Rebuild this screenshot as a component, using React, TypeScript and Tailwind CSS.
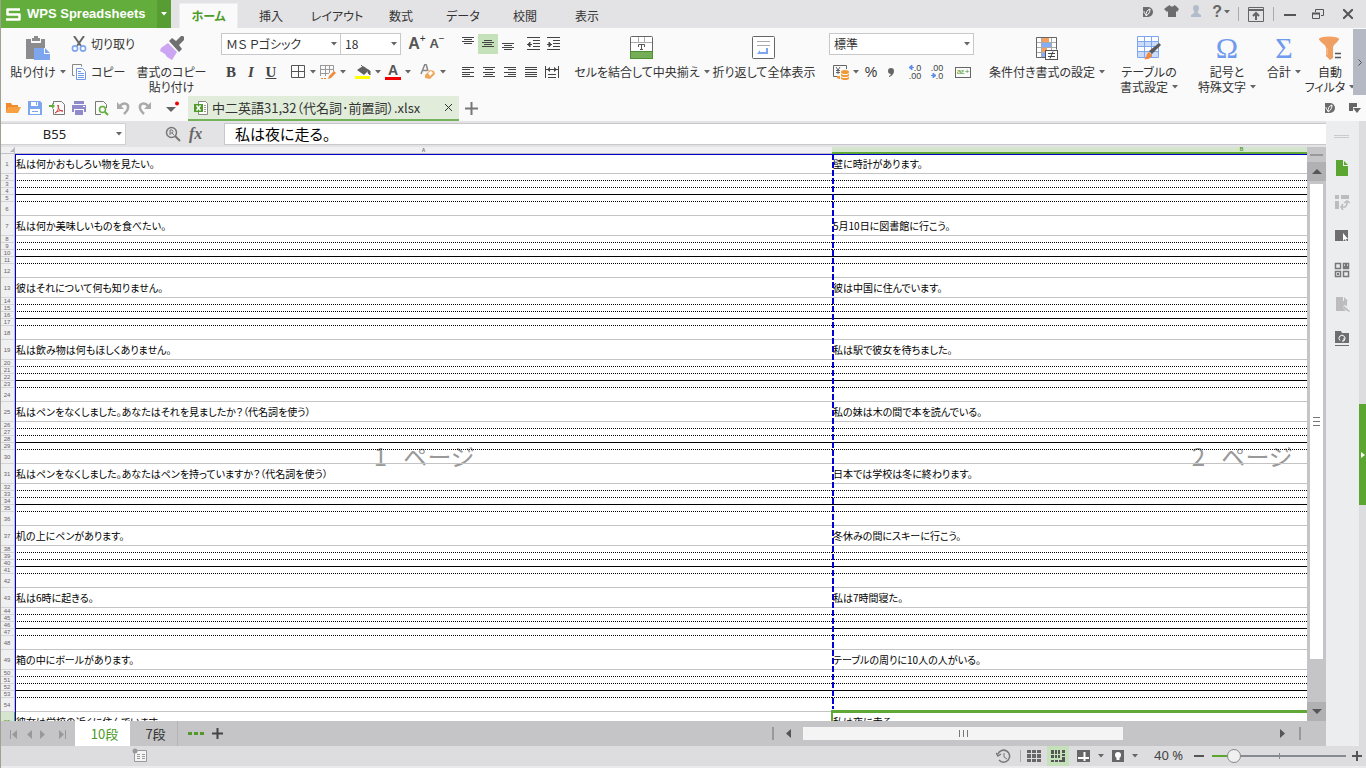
import { Fragment, useState } from 'react';
import type { ReactNode } from 'react';
import clsx from 'clsx';

const menuTabs = [
  { label: 'ホーム', width: 'w-[59px]' },
  { label: '挿入', width: 'w-[66px]' },
  { label: 'レイアウト', width: 'w-[66px]' },
  { label: '数式', width: 'w-[62px]' },
  { label: 'データ', width: 'w-[62px]' },
  { label: '校閲', width: 'w-[62px]' },
  { label: '表示', width: 'w-[62px]' },
];

// every entry starts a block of six rows: the sentence, four ruled lines and a spacer
const sentences: [string, string][] = [
  ['私は何かおもしろい物を見たい。', '壁に時計があります。'],
  ['私は何か美味しいものを食べたい。', '5月10日に図書館に行こう。'],
  ['彼はそれについて何も知りません。', '彼は中国に住んでいます。'],
  ['私は飲み物は何もほしくありません。', '私は駅で彼女を待ちました。'],
  ['私はペンをなくしました。あなたはそれを見ましたか？（代名詞を使う）', '私の妹は木の間で本を読んでいる。'],
  ['私はペンをなくしました。あなたはペンを持っていますか？（代名詞を使う）', '日本では学校は冬に終わります。'],
  ['机の上にペンがあります。', '冬休みの間にスキーに行こう。'],
  ['私は6時に起きる。', '私は7時間寝た。'],
  ['箱の中にボールがあります。', 'テーブルの周りに10人の人がいる。'],
  ['彼女は学校の近くに住んでいます。', '私は夜に走る。'],
];

const ruledLines = [
  'border-b border-dotted border-black',
  'border-b border-dotted border-black',
  'border-b border-black',
  'border-b border-dotted border-black',
];

function Svg({ w = 16, h = 16, children }: { w?: number; h?: number; children: ReactNode }) {
  return (
    <svg width={w} height={h} viewBox={`0 0 ${w} ${h}`} fill="none" className="shrink-0" aria-hidden="true">
      {children}
    </svg>
  );
}

function Caret({ color = '#666' }: { color?: string }) {
  return (
    <Svg w={6} h={4}>
      <path d="M0 0h6L3 3.5z" fill={color} />
    </Svg>
  );
}

function BigButton({ icon, lines, caret, width }: { icon: ReactNode; lines: string[]; caret?: boolean; width: string }) {
  return (
    <button className={clsx('flex shrink-0 flex-col items-center pt-2', width)}>
      <span className="flex h-6 items-center">{icon}</span>
      <span className="mt-1 text-xs leading-[15px] whitespace-nowrap">
        {lines.map((line, i) => (
          <span key={line} className="flex items-center justify-center gap-1">
            {line}
            {caret && i === lines.length - 1 && <Caret />}
          </span>
        ))}
      </span>
    </button>
  );
}

function ToolButton({ label, active, width = 'w-5', children }: { label: string; active?: boolean; width?: string; children: ReactNode }) {
  return (
    <button aria-label={label} className={clsx('flex h-5 shrink-0 items-center justify-center', width, active && 'bg-[#c5e1b9]')}>
      {children}
    </button>
  );
}

function DropButton({ label, children }: { label: string; children: ReactNode }) {
  return (
    <button aria-label={label} className="flex h-5 shrink-0 items-center gap-1">
      {children}
      <Caret />
    </button>
  );
}

function Picker({ label, value, width }: { label: string; value: string; width: string }) {
  return (
    <div className={clsx('relative flex items-center', width)}>
      <select
        aria-label={label}
        className="h-[22px] w-full appearance-none border border-[#c8c8ca] bg-white pl-1 text-xs text-[#333]"
        defaultValue={value}
      >
        <option>{value}</option>
      </select>
      <span className="pointer-events-none absolute right-1">
        <Caret />
      </span>
    </div>
  );
}

function AlignIcon({ lines }: { lines: [number, number, number][] }) {
  return (
    <Svg>
      {lines.map(([x, y, w]) => (
        <rect key={y} x={x} y={y} width={w} height="1" fill="#444" />
      ))}
    </Svg>
  );
}

function PasteIcon() {
  return (
    <Svg w={24} h={24}>
      <path d="M0 3h5v4h10V3h4v9h-8v11H0z" fill="#8c8c8e" />
      <path d="M6 2h2V0h4v2h2v3H6z" fill="#8c8c8e" />
      <path d="M8 12h10v6h6v6H8z" fill="#7ea6ef" />
      <path d="M19 12l5 5h-5z" fill="#7ea6ef" />
    </Svg>
  );
}

function CutIcon() {
  return (
    <Svg>
      <path d="M3 0l7 10M13 0L6 10" stroke="#666" strokeWidth="2" />
      <circle cx="4" cy="12.5" r="2.6" stroke="#7ea6ef" strokeWidth="1.6" />
      <circle cx="12" cy="12.5" r="2.6" stroke="#7ea6ef" strokeWidth="1.6" />
    </Svg>
  );
}

function CopyIcon() {
  return (
    <Svg>
      <path d="M3.500 11.500h-2v-11h9v2" stroke="#888" />
      <path d="M5.500 4.500h6l3 3v8h-9z" fill="#fff" stroke="#6f99e6" />
      <path d="M7 7.500h3M7 9.500h6M7 11.500h6M7 13.500h6" stroke="#6f99e6" />
    </Svg>
  );
}

function BrushIcon() {
  return (
    <Svg w={24} h={24}>
      <path d="M8 7l9 9-5 8-5-3-2-3-5-3 1-3z" fill="#cda6f3" />
      <path d="M9 5l3-3 4 3 5-5h2l1 1v3l-5 5 3 4-3 3z" fill="#707072" />
    </Svg>
  );
}

function BorderIcon() {
  return (
    <Svg>
      <path d="M1.500 1.500h13v12h-13zM8.500 1v13M1 7.500h14" stroke="#555" />
    </Svg>
  );
}

function DrawBorderIcon() {
  return (
    <Svg>
      <path d="M.5 1.500h13v6M.5 1v11M1 5.500h13M1 9.500h8M5.500 2v10M9.500 2v7" stroke="#999" />
      <path d="M1 14.500h6" stroke="#f08a3c" strokeDasharray="2 1" />
      <path d="M8 15l1-3 5-5 2 2-5 5z" fill="#f08a3c" />
    </Svg>
  );
}

function FillIcon() {
  return (
    <Svg>
      <path d="M2 6l6-4 6 4-5 5z" fill="#606062" />
      <path d="M6 1l2 2M13 6l2 1v4l-2-2z" fill="#606062" stroke="#606062" />
      <rect y="12" width="15" height="3" fill="#ffff00" />
    </Svg>
  );
}

function FontColorIcon() {
  return (
    <span className="flex w-4 flex-col items-center">
      <span className="font-['Liberation_Sans'] text-sm leading-3 font-bold text-[#555]">A</span>
      <span className="mt-px h-[3px] w-full bg-[#f00000]" />
    </span>
  );
}

function EraserIcon() {
  return (
    <Svg>
      <path d="M1 10L5 0h1l2 7M3 6.500h4" stroke="#888" strokeWidth="1.500" />
      <path d="M10 6l4 1 1 3-5 5-5-1v-3z" fill="#f2a65a" />
      <path d="M8 9l2 3 3-3-2-2z" fill="#fff" />
    </Svg>
  );
}

function IndentIcon({ out }: { out?: boolean }) {
  return (
    <Svg>
      <path d="M1 1.500h13M7 4.500h7M7 7.500h7M7 10.500h7M1 13.500h13" stroke="#444" />
      <path d={out ? 'M4 6L2 8.500 4 11z' : 'M3 6l2 2.500L3 11z'} fill="#444" stroke="#444" />
      <path d="M1 8.500h5" stroke="#444" />
    </Svg>
  );
}

function DistributeIcon() {
  return (
    <Svg>
      <path d="M1.500 2v12M14.500 2v12M2 5.500h12M4 10.500h8M4 13.500h8" stroke="#444" />
      <path d="M6 3v5L3 5.500zM10 3v5l3-2.500z" fill="#444" />
    </Svg>
  );
}

function MergeIcon() {
  return (
    <Svg w={24} h={24}>
      <rect x=".5" y=".5" width="22" height="22" rx="1" fill="#fff" stroke="#666" />
      <path d="M1 6.500h21M8.500 1v5M14.500 1v5" stroke="#aaa" />
      <path d="M8.500 11V8.500h6V11M11.500 9v5M10 13.500h3" stroke="#555" />
      <rect x=".5" y="15.500" width="22" height="7" fill="#76ae58" stroke="#4f8f34" />
    </Svg>
  );
}

function WrapIcon() {
  return (
    <Svg w={24} h={24}>
      <rect x=".5" y=".5" width="22" height="22" rx="1" fill="#fff" stroke="#666" />
      <path d="M5 5.500h13M5 9.500h13" stroke="#aaa" />
      <path d="M16 12v6H5l3-4v2h6v-4z" fill="#7ea6ef" />
    </Svg>
  );
}

function CurrencyIcon() {
  return (
    <Svg>
      <path d="M4 12.500H.5V1.500h13V5" stroke="#666" />
      <path d="M3 3l2 3 2-3M5 6v4M3 6.500h4M3 8.500h4" stroke="#666" />
      <ellipse cx="12" cy="8" rx="4" ry="2" fill="#f09a35" />
      <path d="M8 9.500c1 2 7 2 8 0v2c-1 2-7 2-8 0zM8 12.500c1 2 7 2 8 0v2c-1 2-7 2-8 0zM4 12h3v3c-2 0-3-1-3-1z" fill="#f09a35" />
    </Svg>
  );
}

function DecimalIcon({ top, bottom, add }: { top: string; bottom: string; add?: boolean }) {
  return (
    <span className="flex flex-col items-end font-['Liberation_Sans'] text-[9px] leading-2 text-[#444]">
      <span className="flex">
        {add && <Svg w={5} h={6}><path d="M5 3.500H1M3 1v5L0 3.500z" fill="#5f8fe8" stroke="#5f8fe8" /></Svg>}
        {top}
      </span>
      <span className="flex">
        {!add && <Svg w={5} h={6}><path d="M0 3.500h4M2 1v5l3-2.500z" fill="#5f8fe8" stroke="#5f8fe8" /></Svg>}
        {bottom}
      </span>
    </span>
  );
}

function ConditionIcon() {
  return (
    <Svg w={24} h={24}>
      <path d="M1.500 1.500h20v20h-20zM1.500 6.500h20M1.500 11.500h20M1.500 16.500h20M6.500 1v20M16.500 1v20" fill="#fff" stroke="#aaa" />
      <path d="M10 21.500H1.500v-20h20V13" stroke="#666" />
      <path d="M7 2h7v4H7zM7 12h5v4H7z" fill="#f4a060" />
      <path d="M7 7h9v4H7zM7 17h3v4H7z" fill="#86aef8" />
      <rect x="10.500" y="14.500" width="12" height="9" fill="#fff" stroke="#555" />
      <path d="M13 17.500h7M13 20.500h7M18 15.500l-3 7" stroke="#444" />
    </Svg>
  );
}

function TableStyleIcon() {
  return (
    <Svg w={24} h={24}>
      <path d="M.5.500h21v21H.5z" fill="#fff" />
      <path d="M1 6h20v5H1zM1 16h20v5H1z" fill="#ccdcf8" />
      <path d="M.5.500h21v21H.5zM.5 5.500h21M.5 10.500h21M.5 15.500h21M7.500 0v21M14.500 0v21" stroke="#7ea6ef" />
      <path d="M12 15L22 7l2 2-9 9z" fill="#5a5a5c" />
      <path d="M7 23c3-1 2-6 5-7l3 3c-1 4-5 5-8 4z" fill="#f08a3c" />
    </Svg>
  );
}

function FilterIcon() {
  return (
    <Svg w={24} h={24}>
      <ellipse cx="11" cy="3" rx="10" ry="2.500" fill="#f4a060" />
      <path d="M1 3h20c-1 4-6 5-6 9v10l-3 2-4-4v-8c0-4-6-5-7-9z" fill="#f09f62" />
      <path d="M9 12v7" stroke="#f8c8a0" />
      <path d="M17 17.500h6M17 21.500h6" stroke="#555" strokeWidth="1.500" />
    </Svg>
  );
}

function DocerIcon() {
  return (
    <Svg w={12} h={12}>
      <path d="M1 1h5a5 5 0 010 10H1z" fill="#6c6c6e" />
      <path d="M4 10c0-4 1-6 4-7 0 3-1 5-4 7zM4 9C2 7 2 6 2 5" stroke="#fff" />
    </Svg>
  );
}

function TitleBar() {
  return (
    <header className="flex h-7 shrink-0 bg-[#e3e3e5]">
      <button className="flex w-[157px] items-center gap-1.5 bg-[#62ad3c] pl-1.5 font-['Liberation_Sans'] text-[13px] font-bold whitespace-nowrap text-white">
        <Svg w={15} h={13}>
          <path d="M14 1.500H1.500v5h12v5H0" stroke="#fff" strokeWidth="2.500" strokeLinejoin="round" />
        </Svg>
        WPS Spreadsheets
      </button>
      <button aria-label="アプリケーションメニュー" className="flex w-3.5 items-center justify-center bg-[#579d33]">
        <Caret color="#fff" />
      </button>
      <nav className="ml-2 flex flex-1 items-end">
        {menuTabs.map((tab, i) => (
          <button
            key={tab.label}
            className={clsx(
              'h-[25px] text-xs',
              tab.width,
              i === 0 ? 'border border-b-0 border-[#eeeeef] bg-[#fafafa] font-bold text-[#4d9a28]' : 'text-[#333]',
            )}
          >
            {tab.label}
          </button>
        ))}
      </nav>
      <div className="flex items-center">
        <div className="flex items-center gap-2 pb-1">
          <ToolButton label="Docer" width="w-4"><DocerIcon /></ToolButton>
          <ToolButton label="スキン" width="w-4">
            <Svg>
              <path d="M4 2l2-1c0 2 4 2 4 0l2 1 3 3-2 3-1-1v6H4V7L3 8 0 5z" fill="#6c6c6e" />
            </Svg>
          </ToolButton>
          <ToolButton label="ログイン" width="w-4">
            <Svg>
              <path d="M5 4a3 3 0 016 0c0 3-2 3-1 5l3 2v2H3v-2l3-2c1-2-1-2-1-5z" fill="#b3bccb" />
            </Svg>
          </ToolButton>
          <button aria-label="ヘルプ" className="flex items-center gap-0.5 font-['Liberation_Sans'] text-base font-bold text-[#666]">
            ?<Caret />
          </button>
        </div>
        <span className="ml-2 h-3.5 w-px bg-[#aaa]" />
        <ToolButton label="リボンを隠す" width="w-[34px]">
          <Svg w={16} h={15}>
            <path d="M.5 2.500h15v12H.5zM.5.500h15v3H.5z" stroke="#666" />
            <path d="M8 13V6M5 9l3-3 3 3" stroke="#666" strokeWidth="2" />
          </Svg>
        </ToolButton>
        <span className="h-3.5 w-px bg-[#aaa]" />
        <ToolButton label="最小化" width="w-8">
          <Svg w={12}><path d="M0 9h12" stroke="#555" strokeWidth="2" /></Svg>
        </ToolButton>
        <ToolButton label="元に戻す" width="w-6">
          <Svg w={12} h={11}>
            <path d="M3.500 3V.5h8v6H9M.5 4.500h7v5h-7z" stroke="#555" />
            <path d="M0 4.500h8" stroke="#555" strokeWidth="2" />
          </Svg>
        </ToolButton>
        <ToolButton label="閉じる" width="w-9">
          <Svg w={10} h={10}><path d="M0 0l10 10M10 0L0 10" stroke="#555" strokeWidth="2" /></Svg>
        </ToolButton>
      </div>
    </header>
  );
}

function Ribbon() {
  return (
    <div className="flex h-[67px] shrink-0 overflow-hidden bg-[#fafafa]">
      <BigButton icon={<PasteIcon />} lines={['貼り付け']} caret width="ml-[5px] w-[66px]" />
      <div className="flex w-[64px] shrink-0 flex-col gap-2 pt-1.5 text-xs whitespace-nowrap">
        <button className="flex h-5 items-center gap-1"><CutIcon />切り取り</button>
        <button className="flex h-5 items-center gap-1"><CopyIcon />コピー</button>
      </div>
      <BigButton icon={<BrushIcon />} lines={['書式のコピー', '貼り付け']} width="w-[73px]" />

      <div className="ml-[13px] flex w-[226px] shrink-0 flex-col gap-[7px] pt-[5px]">
        <div className="flex items-center">
          <Picker label="フォント" value="ＭＳ Ｐゴシック" width="w-[122px]" />
          <Picker label="フォント サイズ" value="18" width="-ml-px w-[62px]" />
          <ToolButton label="フォント サイズの拡大" width="ml-1.5 w-5">
            <span className="font-['Liberation_Sans'] text-base font-bold text-[#555]">A</span>
            <span className="mb-3 font-['Liberation_Sans'] text-[10px]">+</span>
          </ToolButton>
          <ToolButton label="フォント サイズの縮小">
            <span className="font-['Liberation_Sans'] text-[13px] font-bold text-[#555]">A</span>
            <span className="mb-3 font-['Liberation_Sans'] text-[10px]">−</span>
          </ToolButton>
        </div>
        <div className="flex items-center gap-[9px]">
          <div className="flex font-['Liberation_Serif'] text-[15px] text-[#444]">
            <ToolButton label="太字"><b>B</b></ToolButton>
            <ToolButton label="斜体"><b className="italic">I</b></ToolButton>
            <ToolButton label="下線"><b className="underline">U</b></ToolButton>
          </div>
          <div className="flex gap-1">
            <DropButton label="罫線"><BorderIcon /></DropButton>
            <DropButton label="罫線の作成"><DrawBorderIcon /></DropButton>
          </div>
          <div className="flex gap-1">
            <DropButton label="塗りつぶしの色"><FillIcon /></DropButton>
            <DropButton label="フォントの色"><FontColorIcon /></DropButton>
          </div>
          <DropButton label="クリア"><EraserIcon /></DropButton>
        </div>
      </div>

      <div className="ml-[11px] flex w-[110px] shrink-0 flex-col gap-2 pt-1.5">
        <div className="flex">
          <ToolButton label="上揃え"><AlignIcon lines={[[2, 1, 12], [4, 3, 8], [2, 5, 12], [4, 7, 8]]} /></ToolButton>
          <ToolButton label="上下中央揃え" active><AlignIcon lines={[[4, 4, 8], [2, 6, 12], [4, 8, 8], [2, 10, 12]]} /></ToolButton>
          <ToolButton label="下揃え"><AlignIcon lines={[[2, 7, 12], [4, 9, 8], [2, 11, 12], [4, 13, 8]]} /></ToolButton>
          <ToolButton label="インデントを減らす" width="ml-1.5 w-5"><IndentIcon out /></ToolButton>
          <ToolButton label="インデントを増やす"><IndentIcon /></ToolButton>
        </div>
        <div className="flex gap-px">
          <ToolButton label="左揃え"><AlignIcon lines={[[2, 3, 12], [2, 5, 8], [2, 8, 12], [2, 10, 8], [2, 12, 12]]} /></ToolButton>
          <ToolButton label="中央揃え"><AlignIcon lines={[[2, 3, 12], [4, 5, 8], [2, 8, 12], [4, 10, 8], [2, 12, 12]]} /></ToolButton>
          <ToolButton label="右揃え"><AlignIcon lines={[[2, 3, 12], [6, 5, 8], [2, 8, 12], [6, 10, 8], [2, 12, 12]]} /></ToolButton>
          <ToolButton label="両端揃え"><AlignIcon lines={[[2, 3, 12], [2, 5, 12], [2, 8, 12], [2, 10, 12], [2, 12, 12]]} /></ToolButton>
          <ToolButton label="均等割り付け"><DistributeIcon /></ToolButton>
        </div>
      </div>

      <BigButton icon={<MergeIcon />} lines={['セルを結合して中央揃え']} caret width="ml-1.5 w-[136px]" />
      <BigButton icon={<WrapIcon />} lines={['折り返して全体表示']} width="w-[108px]" />

      <div className="ml-[11px] flex w-[145px] shrink-0 flex-col gap-[7px] pt-[5px]">
        <Picker label="表示形式" value="標準" width="w-[145px]" />
        <div className="flex items-center pl-1">
          <DropButton label="通貨"><CurrencyIcon /></DropButton>
          <ToolButton label="パーセント" width="ml-0.5 w-5"><span className="font-['Liberation_Sans'] text-sm">%</span></ToolButton>
          <ToolButton label="桁区切り">
            <Svg w={6} h={9}><path d="M3 0q3 0 3 3 0 4-5 6V8q2-1 2-2Q0 6 0 3 0 0 3 0z" fill="#666" /></Svg>
          </ToolButton>
          <ToolButton label="小数点表示桁数を増やす" width="ml-1 w-5"><DecimalIcon top=".0" bottom=".00" add /></ToolButton>
          <ToolButton label="小数点表示桁数を減らす" width="ml-0.5 w-5"><DecimalIcon top=".00" bottom=".0" /></ToolButton>
          <ToolButton label="セル書式" width="ml-1.5 w-5">
            <span className="flex h-[11px] w-4 items-center justify-center border border-[#666] font-['Liberation_Sans'] text-[8px] leading-2 text-[#4f9a2b]">
              aε+
            </span>
          </ToolButton>
        </div>
      </div>

      <BigButton icon={<ConditionIcon />} lines={['条件付き書式の設定']} caret width="ml-[13px] w-[120px]" />
      <BigButton icon={<TableStyleIcon />} lines={['テーブルの', '書式設定']} caret width="ml-2 w-[68px]" />
      <BigButton
        icon={<span className="font-['Liberation_Serif'] text-3xl leading-none text-[#6f9bef]">Ω</span>}
        lines={['記号と', '特殊文字']}
        caret
        width="ml-2.5 w-[68px]"
      />
      <BigButton
        icon={<span className="font-['Liberation_Serif'] text-3xl leading-none text-[#6f9bef]">Σ</span>}
        lines={['合計']}
        caret
        width="w-[46px]"
      />
      <BigButton icon={<FilterIcon />} lines={['自動', 'フィルタ']} caret width="w-[46px]" />
      <button aria-label="次へ" className="mt-px ml-auto flex w-[13px] shrink-0 items-center justify-center bg-[#b5b9c3]">
        <Svg w={4} h={7}><path d="M.5.500l3 3-3 3" stroke="#555" /></Svg>
      </button>
    </div>
  );
}

function DocumentBar() {
  return (
    <div className="flex h-[26px] shrink-0 items-center bg-[#fafafa]">
      <div className="flex items-center gap-0.5 pl-[3px]">
        <ToolButton label="開く">
          <Svg>
            <path d="M1 13V3h5l1 2h6v2H4z" fill="#f08a2c" />
            <path d="M4 7h12l-3 6H1z" fill="#f9a040" />
          </Svg>
        </ToolButton>
        <ToolButton label="保存">
          <Svg>
            <path d="M1 1h12l2 2v12H1z" fill="#7ea6ef" />
            <path d="M4 2h7v4H4zM3 9h10v5H3z" fill="#fff" />
            <path d="M9 2h1v3H9zM5 11h6v1H5z" fill="#7ea6ef" />
          </Svg>
        </ToolButton>
        <ToolButton label="PDFに出力">
          <Svg>
            <path d="M4.500 4V1.500h8l3 3v10h-11V9" stroke="#777" />
            <path d="M6 13c3-2 4-5 3-8 0 4 2 6 5 6-3-1-5 0-8 2z" stroke="#d83a3a" />
            <path d="M0 5h3V3l3 3-3 3V7H0z" fill="#62ad3c" />
          </Svg>
        </ToolButton>
        <ToolButton label="印刷">
          <Svg>
            <path d="M3 1h10v3H3zM1 5h14v7h-2V9H3v3H1zM4 10h8v5H4z" fill="#8f8bcb" />
            <path d="M12 6h2v1h-2z" fill="#fff" />
          </Svg>
        </ToolButton>
        <ToolButton label="印刷プレビュー">
          <Svg>
            <path d="M8 14.500H2.500v-13h8l3 3V8" stroke="#777" />
            <circle cx="9.500" cy="9.500" r="3" stroke="#62ad3c" strokeWidth="1.500" />
            <path d="M12 12l3 3" stroke="#62ad3c" strokeWidth="2" />
          </Svg>
        </ToolButton>
        <ToolButton label="元に戻す">
          <Svg>
            <path d="M5 6c3-4 9-3 8 2 0 2-2 4-4 6" stroke="#aaa" strokeWidth="2.500" />
            <path d="M2 2v7h7z" fill="#aaa" />
          </Svg>
        </ToolButton>
        <ToolButton label="やり直し">
          <Svg>
            <path d="M11 6C8 2 2 3 3 8c0 2 2 4 4 6" stroke="#aaa" strokeWidth="2.500" />
            <path d="M14 2v7H7z" fill="#aaa" />
          </Svg>
        </ToolButton>
        <ToolButton label="クイック アクセス" width="w-[31px]">
          <Svg w={14} h={14}>
            <path d="M0 6h10l-5 5z" fill="#666" />
            <circle cx="11" cy="2.500" r="2" fill="#f00000" />
          </Svg>
        </ToolButton>
      </div>
      <div className="flex h-[25px] w-[271px] items-center self-end border-b-2 border-[#74b25c] bg-[#e1edda] pl-1.5">
        <Svg w={14} h={14}>
          <path d="M4.500 3V.5h7l2 2v11h-9V11" fill="#fff" stroke="#888" />
          <path d="M10 4.500h2M10 6.500h2M10 8.500h2M10 10.500h2" stroke="#999" />
          <path d="M0 3h9v8H0z" fill="#4f9a2b" />
          <path d="M2.500 4.500l4 5M6.500 4.500l-4 5" stroke="#fff" strokeWidth="1.500" />
        </Svg>
        <span className="ml-1 flex-1 text-[13px] whitespace-nowrap text-[#333]">中二英語31,32（代名詞･前置詞）.xlsx</span>
        <button aria-label="タブを閉じる" className="px-[7px]">
          <Svg w={7} h={7}><path d="M0 0l7 7M7 0L0 7" stroke="#333" /></Svg>
        </button>
      </div>
      <button aria-label="新しいブック" className="px-1.5">
        <Svg w={13} h={13}><path d="M6.500 0v13M0 6.500h13" stroke="#777" strokeWidth="2" /></Svg>
      </button>
      <div className="ml-auto flex items-center gap-3 pr-1">
        <button aria-label="Docer"><DocerIcon /></button>
        <button aria-label="タブ一覧">
          <Svg w={14} h={12}><path d="M1 1h8v4H5v4H1z" fill="#666" /><path d="M5 6h8l-4 5z" fill="#666" /></Svg>
        </button>
      </div>
    </div>
  );
}

function FormulaBar() {
  return (
    <div className="flex h-[26px] shrink-0 items-center bg-[#e3e3e5] text-[#222]">
      <div className="relative flex w-[126px] items-center">
        <input
          aria-label="名前ボックス"
          defaultValue="B55"
          className="h-[22px] w-full border border-l-0 border-[#d0d0d2] bg-white pr-4 text-center font-['Noto_Sans'] text-[13px]"
        />
        <span className="absolute right-1"><Caret /></span>
      </div>
      <div className="flex w-[98px] items-center gap-2 pl-[39px]">
        <button aria-label="関数の検索">
          <Svg>
            <circle cx="6.500" cy="6.500" r="5" stroke="#777" strokeWidth="1.500" />
            <path d="M10 10l5 5" stroke="#777" strokeWidth="2" />
            <path d="M5 9V4h2q2 1.500 0 3H5M7 7l2 2" stroke="#777" />
          </Svg>
        </button>
        <button aria-label="関数の挿入" className="font-['Liberation_Serif'] text-base leading-none font-bold text-[#666] italic">fx</button>
      </div>
      <input
        aria-label="数式バー"
        defaultValue="私は夜に走る。"
        className="h-[22px] min-w-0 flex-1 border border-r-0 border-[#c8c8cc] bg-white pl-2.5 text-[15px] text-black"
      />
    </div>
  );
}

function RowHeader({ n, selected }: { n: number; selected?: boolean }) {
  return (
    <th
      scope="row"
      className={clsx(
        "border-r border-b border-b-[#d4d4d6] p-0 text-center font-['Liberation_Sans'] text-[6px] leading-[6px] font-normal",
        selected ? 'border-r-[#5fa836] bg-[#d5e6cf] text-[#4d9a28]' : 'border-r-[#c0c0c4] bg-[#f0f0f2] text-[#666]',
      )}
    >
      {n}
    </th>
  );
}

function Sheet() {
  return (
    <div className="relative min-w-0 flex-1 overflow-hidden bg-white">
      {/* page number marks of the page break preview */}
      <div className="absolute top-0 left-[15px] flex h-[618px] text-2xl text-[#999]">
        <span className="flex w-[818px] items-center justify-center gap-4"><span>1</span><span>ページ</span></span>
        <span className="flex w-[818px] items-center justify-center gap-4"><span>2</span><span>ページ</span></span>
      </div>
      <table className="relative w-[1651px] table-fixed border-separate border-spacing-0 text-[10px] leading-[10px] whitespace-nowrap text-black">
        <colgroup>
          <col className="w-[15px]" />
          <col className="w-[817px]" />
          <col className="w-[819px]" />
        </colgroup>
        <thead>
          <tr className="h-[7px] font-['Liberation_Sans'] text-[5px] leading-[5px]">
            <th className="border-r border-b border-[#c0c0c4] bg-[#f0f0f2] p-0">
              <span className="ml-auto block size-1 bg-[#b4b4b8] [clip-path:polygon(100%_0,100%_100%,0_100%)]" />
            </th>
            <th className="border-b border-[#c0c0c4] bg-[#f0f0f2] p-0 text-[#777]">A</th>
            <th className="border-b-2 border-[#5fa836] bg-[#d5e6cf] p-0 text-[#4d9a28]">B</th>
          </tr>
        </thead>
        <tbody>
          {sentences.map(([a, b], i) => {
            const n = i * 6 + 1;
            const last = i === sentences.length - 1;
            return (
              <Fragment key={n}>
                <tr className="h-5">
                  <RowHeader n={n} selected={last} />
                  <td className="border-b border-[#c4c4c4] p-0 pl-px">{a}</td>
                  <td className="relative border-b border-[#c4c4c4] p-0 pl-px">
                    {b}
                    {last && <span className="absolute -inset-x-px -top-0.5 bottom-0 z-10 border-2 border-t-[3px] border-[#5fa836]" />}
                  </td>
                </tr>
                {!last && ruledLines.map((line, j) => (
                  <tr key={j} className="h-[7px] text-[5px] leading-[5px]">
                    <RowHeader n={n + j + 1} />
                    <td className={clsx('p-0', line)} />
                    <td className={clsx('p-0', line)} />
                  </tr>
                ))}
                {!last && (
                  <tr className="h-3.5 text-[5px] leading-[5px]">
                    <RowHeader n={n + 5} />
                    <td className="border-b border-[#c4c4c4] p-0" />
                    <td className="border-b border-[#c4c4c4] p-0" />
                  </tr>
                )}
              </Fragment>
            );
          })}
        </tbody>
      </table>
      {/* print area frame and the break between the two pages */}
      <div className="pointer-events-none absolute top-[7px] bottom-0 left-[15px] w-full border-t border-l border-[#0000c8]" />
      <div className="pointer-events-none absolute top-[7px] bottom-3 left-[832px] w-0.5 bg-[repeating-linear-gradient(to_bottom,#0000d8_0_6px,transparent_6px_8px)]" />
    </div>
  );
}

function VerticalScroll() {
  return (
    <div className="flex w-[19px] shrink-0 flex-col bg-[#c5c5c7]">
      <div className="flex h-[15px] items-center justify-center"><span className="h-0.5 w-[13px] bg-[#999]" /></div>
      <button aria-label="上へ" className="flex h-[19px] items-center justify-center bg-[#b1b1b3]">
        <Svg w={10} h={5}><path d="M0 5h10L5 0z" fill="#555" /></Svg>
      </button>
      <div className="flex flex-1 flex-col pt-[3px]">
        <div className="mx-[3px] flex h-11/12 flex-col items-center justify-center gap-[3px] bg-white">
          <span className="h-px w-[7px] bg-[#777]" />
          <span className="h-px w-[7px] bg-[#777]" />
          <span className="h-px w-[7px] bg-[#777]" />
        </div>
      </div>
      <button aria-label="下へ" className="flex h-[19px] items-center justify-center bg-[#b1b1b3]">
        <Svg w={10} h={5}><path d="M0 0h10L5 5z" fill="#555" /></Svg>
      </button>
    </div>
  );
}

function SheetTabs() {
  const [active, setActive] = useState('10段');

  return (
    <div className="flex h-[25px] shrink-0 items-center bg-[#c5c5c7]">
      <div className="flex w-[75px] items-center pl-[9px]">
        <button aria-label="最初のシート"><Svg w={9} h={10}><path d="M1.500 1v9" stroke="#999" /><path d="M8 1v9L3 5.500z" fill="#999" /></Svg></button>
        <button aria-label="前のシート" className="ml-2"><Svg w={6} h={10}><path d="M6 1v9L1 5.500z" fill="#999" /></Svg></button>
        <button aria-label="次のシート" className="ml-2"><Svg w={6} h={10}><path d="M0 1v9l5-4.500z" fill="#999" /></Svg></button>
        <button aria-label="最後のシート" className="ml-3"><Svg w={9} h={10}><path d="M7.500 1v9" stroke="#999" /><path d="M1 1v9l5-4.500z" fill="#999" /></Svg></button>
      </div>
      {['10段', '7段'].map((name) => (
        <button
          key={name}
          onClick={() => setActive(name)}
          className={clsx(
            'h-full pl-1 text-[13px]',
            name === active ? 'w-[55px] bg-white text-[#4d9a28]' : 'w-12 border-r border-[#b4b4b6] text-[#333]',
          )}
        >
          {name}
        </button>
      ))}
      <button aria-label="シート一覧" className="ml-2.5">
        <Svg w={16} h={4}><path d="M0 0h4v3H0zM6 0h4v3H6zM12 0h4v3h-4z" fill="#4f9a2b" /></Svg>
      </button>
      <button aria-label="シートの追加" className="ml-2">
        <Svg w={11} h={11}><path d="M5.500 0v11M0 5.500h11" stroke="#444" strokeWidth="2" /></Svg>
      </button>
      <div className="ml-auto flex items-center pr-[25px]">
        <span className="h-[13px] w-0.5 bg-[#999]" />
        <button aria-label="左へ" className="px-3"><Svg w={5} h={9}><path d="M5 0v9L0 4.500z" fill="#555" /></Svg></button>
        <div className="flex h-[13px] w-80 items-center justify-center gap-[3px] bg-[#f4f4f4]">
          <span className="h-[7px] w-px bg-[#777]" />
          <span className="h-[7px] w-px bg-[#777]" />
          <span className="h-[7px] w-px bg-[#777]" />
        </div>
        <span className="w-[157px]" />
        <button aria-label="右へ"><Svg w={5} h={9}><path d="M0 0v9l5-4.500z" fill="#555" /></Svg></button>
        <span className="ml-3.5 h-[13px] w-0.5 bg-[#999]" />
      </div>
    </div>
  );
}

function SidePane() {
  return (
    <aside className="flex w-[33px] shrink-0 flex-col items-center bg-[#ecedef] pt-3.5 pr-0.5">
      <span className="h-[3px] w-[15px] border-y border-[#c8ccd2]" />
      <div className="mt-[22px] flex flex-col items-center gap-[18px]">
        <button aria-label="新規">
          <Svg><path d="M2 0h7v6h5v10H2z" fill="#5aa630" /><path d="M10 1l4 4h-4z" fill="#5aa630" /></Svg>
        </button>
        <button aria-label="ピボット">
          <Svg>
            <path d="M1 1h4v4H1zM7 1h8v4H7zM1 7h4v8H1z" fill="#bcbcbe" />
            <path d="M7 13h4q2-1 2-5M9 10l-2 3 2 3M10 9l3-2 3 2" stroke="#bcbcbe" strokeWidth="1.500" />
          </Svg>
        </button>
        <button aria-label="選択">
          <Svg><path d="M1 2h13v11H1z" fill="#6e6e70" /><path d="M9 5v8l2-2 1 3h1l-1-3h2z" fill="#fff" /></Svg>
        </button>
        <button aria-label="図形">
          <Svg>
            <path d="M1.500 1.500h5v5h-5zM9.500 1.500h5v5h-5zM1.500 9.500h5v5h-5zM9.500 9.500h5v5h-5z" stroke="#777" strokeWidth="1.500" />
            <path d="M11 2h2v2h1v2h-4V4h1zM3 11h2v2H3z" fill="#777" />
          </Svg>
        </button>
        <button aria-label="プロパティ">
          <Svg><path d="M2 1h7v4h4v5l-3-1-1 3 3 3H2z" fill="#bcbcbe" /><path d="M10 1l4 4h-4zM10 10l6 5-1 1-6-4z" fill="#bcbcbe" /></Svg>
        </button>
        <button aria-label="バックアップ">
          <Svg>
            <path d="M1 1h6l1 2h7v10H1z" fill="#6e6e70" />
            <path d="M1 15.500h14" stroke="#6e6e70" />
            <path d="M6 10.500a3 3 0 114 0M10 8v3H8" stroke="#fff" />
          </Svg>
        </button>
      </div>
    </aside>
  );
}

function StatusBar() {
  const [zoom, setZoom] = useState(40);

  return (
    <footer className="flex h-[22px] shrink-0 items-center border-b-2 border-[#ebebec] bg-[#dddde0]">
      <button aria-label="マクロの記録" className="ml-[132px]">
        <Svg>
          <path d="M2.500 4v9.500h12v-11H5" fill="#f4f4f4" stroke="#999" />
          <path d="M5 6.500h3M10 6.500h3M5 8.500h3M10 8.500h3M5 10.500h3M10 10.500h3" stroke="#999" />
          <circle cx="3" cy="3" r="2.500" fill="#999" />
        </Svg>
      </button>
      <div className="ml-auto flex h-full items-center pr-1">
        <ToolButton label="履歴">
          <Svg>
            <path d="M2 6a6 6 0 111 6M0 5l2 3 3-2" stroke="#777" strokeWidth="1.500" />
            <path d="M8 5v4l3 2" stroke="#777" />
          </Svg>
        </ToolButton>
        <span className="ml-1.5 h-3 w-px bg-[#aaa]" />
        <ToolButton label="標準" width="w-[26px]">
          <Svg w={14} h={12}>
            <path d="M0 0h14v12H0z" fill="#666" />
            <path d="M0 3.500h14M0 8.500h14M4.500 0v12M9.500 0v12" stroke="#dddde0" />
          </Svg>
        </ToolButton>
        <ToolButton label="改ページ プレビュー" active width="w-[22px]">
          <Svg w={14} h={12}>
            <path d="M0 0h9v8H0z" fill="#555" />
            <path d="M11 0h3v12H0v-2h11z" fill="#555" />
            <path d="M0 4.500h9M3.500 0v8M6.500 0v8M11 3.500h3M11 6.500h3M3.500 9v3M7.500 9v3" stroke="#c5e1b9" />
          </Svg>
        </ToolButton>
        <button aria-label="ウィンドウ枠の固定" className="ml-2 flex items-center gap-2">
          <Svg w={13} h={12}><path d="M0 0h13v12H0z" fill="#666" /><path d="M1 8h11M7.500 2v9" stroke="#fff" strokeWidth="2" /></Svg>
          <Caret />
        </button>
        <button aria-label="ハイライト" className="ml-2 flex items-center gap-2">
          <Svg w={12} h={12}><path d="M0 0h12v12H0z" fill="#666" /><circle cx="6" cy="5" r="3" fill="#fff" /><path d="M4.500 7h3v3h-3z" fill="#fff" /></Svg>
          <Caret />
        </button>
        <output className="ml-4 w-10 font-['Noto_Sans'] text-[13px] whitespace-nowrap text-[#444]">{zoom} %</output>
        <button aria-label="縮小"><Svg w={10} h={10}><path d="M0 5h10" stroke="#555" strokeWidth="2" /></Svg></button>
        <div className="relative ml-2 flex w-[134px] items-center">
          <span className="absolute h-0.5 w-full bg-[#888a92]" />
          <span className="absolute h-0.5 w-[18px] bg-[#5aa630]" />
          <span className="absolute left-1/2 h-1.5 w-px bg-[#888a92]" />
          <input
            type="range"
            aria-label="ズーム"
            min={20}
            max={180}
            value={zoom}
            onChange={(e) => setZoom(Number(e.target.value))}
            className="relative h-4 w-full appearance-none bg-transparent [&::-webkit-slider-thumb]:size-3.5 [&::-webkit-slider-thumb]:appearance-none [&::-webkit-slider-thumb]:rounded-full [&::-webkit-slider-thumb]:border [&::-webkit-slider-thumb]:border-[#888] [&::-webkit-slider-thumb]:bg-[#f0f0f0]"
          />
        </div>
        <button aria-label="拡大" className="ml-1.5"><Svg w={10} h={10}><path d="M0 5h10M5 0v10" stroke="#555" strokeWidth="2" /></Svg></button>
      </div>
    </footer>
  );
}

export default function App() {
  return (
    <div
      lang="ja"
      className="relative flex h-screen flex-col overflow-hidden bg-[#fafafa] font-['Noto_Sans_CJK_JP',sans-serif] text-[#333] [font-feature-settings:'palt']"
    >
      <TitleBar />
      <Ribbon />
      <DocumentBar />
      <div className="flex min-h-0 flex-1">
        <main className="flex min-w-0 flex-1 flex-col">
          <FormulaBar />
          <div className="flex min-h-0 flex-1">
            <Sheet />
            <VerticalScroll />
          </div>
          <SheetTabs />
        </main>
        <SidePane />
        <div className="flex w-[7px] shrink-0 flex-col bg-[#dddde0] pt-[283px]">
          <button aria-label="作業ウィンドウ" className="flex h-[101px] items-center justify-center bg-[#5aa630]">
            <Svg w={4} h={6}><path d="M0 0l4 3-4 3z" fill="#fff" /></Svg>
          </button>
        </div>
      </div>
      <StatusBar />
      {/* window edge */}
      <div className="pointer-events-none absolute inset-y-0 left-0 w-px bg-[#a0a096]" />
    </div>
  );
}
